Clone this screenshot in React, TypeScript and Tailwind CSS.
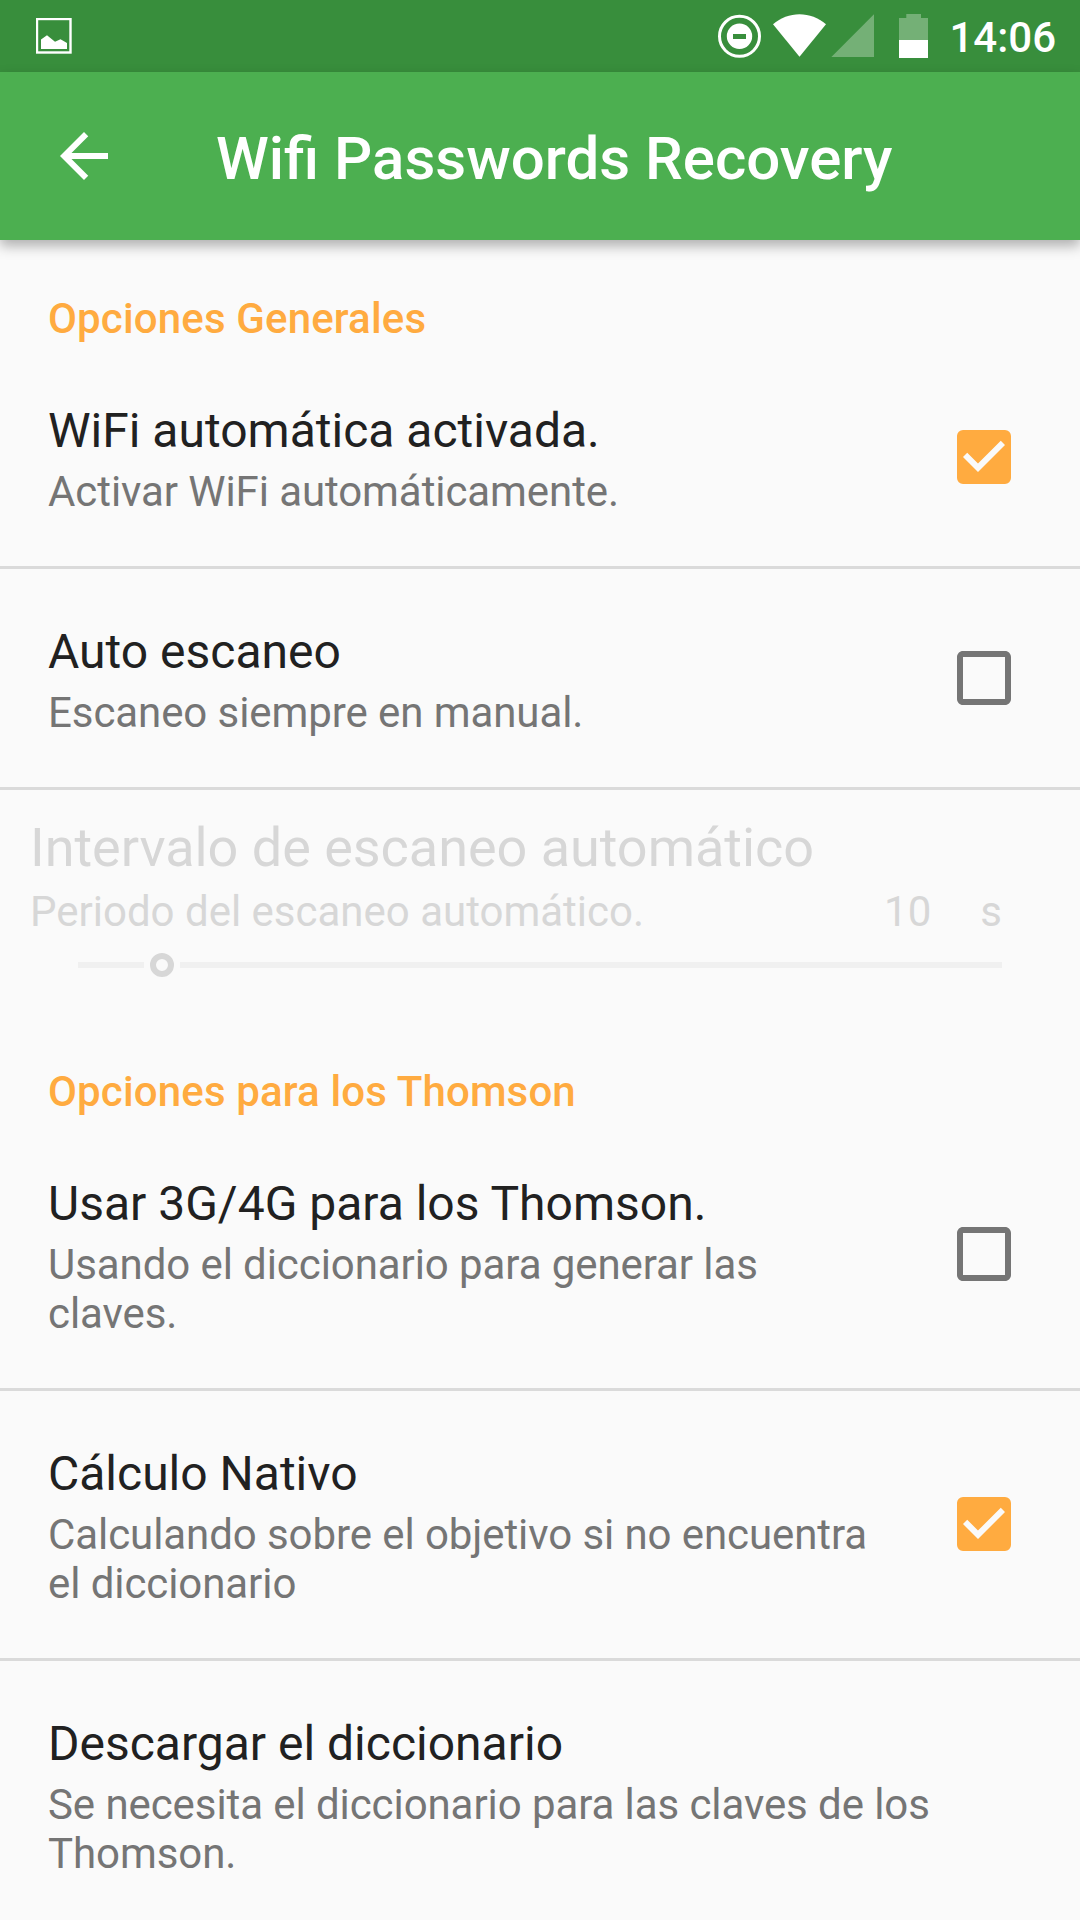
import {MdArrowBack, MdCheckBox, MdCheckBoxOutlineBlank} from 'react-icons/md';

type RowProps = {
  title: string;
  summary: string;
};

type CheckRowProps = RowProps & {
  checked?: boolean;
};

function StatusBar() {
  return (
    <div className="flex h-[72px] items-center justify-between bg-[#388e3c] text-white">
      <svg className="ml-9" width="36" height="36" viewBox="0 0 36 36">
        <rect x="1" y="1" width="33.5" height="33.5" fill="none" stroke="currentColor" strokeWidth="2.4" />
        <path d="M5 31V21.5L11 17.3L19 23.7L24.5 21.3L31 25V31Z" fill="currentColor" />
      </svg>
      <div className="flex items-center pr-6">
        <svg width="220" height="72" viewBox="712 0 220 72" fill="currentColor">
          <circle cx="739.5" cy="36.3" r="20" fill="none" stroke="currentColor" strokeWidth="3" />
          <path
            fillRule="evenodd"
            d="M739.5 23.6a12.7 12.7 0 1 0 0 25.4a12.7 12.7 0 1 0 0-25.4ZM733 34H746V39H733Z"
          />
          <path d="M773 24.2C788 10.8 811 10.8 826 24.2L799.5 56.7Z" />
          <path d="M874 14.3V57H831.4Z" fillOpacity="0.3" />
          <path d="M906.3 14H921V18H928V40H899V18H906.3Z" fillOpacity="0.3" />
          <path d="M899 40H928V58H899Z" />
        </svg>
        <span className="mt-[3px] ml-[17px] text-[42px] leading-[49px] font-medium">14:06</span>
      </div>
    </div>
  );
}

function Toolbar() {
  return (
    <header className="flex h-[168px] items-center bg-[#4caf50] pl-12 text-white shadow-[0_6px_12px_rgba(0,0,0,0.3)]">
      <MdArrowBack size={72} />
      <h1 className="mt-[5px] ml-24 text-[60px] leading-[70px] font-medium">Wifi Passwords Recovery</h1>
    </header>
  );
}

function SectionTitle({children}: {children: string}) {
  return (
    <h2 className="pb-[5px] pl-12 text-[42px] leading-[49px] font-medium tracking-[0.15px] text-[#ffab40]">
      {children}
    </h2>
  );
}

function Row({title, summary}: RowProps) {
  return (
    <div className="min-w-0 flex-1 pt-[54px] pr-12 pb-[50px] pl-12">
      <p className="text-5xl leading-[57px] text-[#212121]">{title}</p>
      <p className="mt-2 text-[42px] leading-[49px] tracking-[-0.08px] text-[#757575]">{summary}</p>
    </div>
  );
}

function CheckRow({title, summary, checked}: CheckRowProps) {
  return (
    <div className="flex items-center gap-6 pr-[60px]">
      <Row title={title} summary={summary} />
      {checked ? (
        <MdCheckBox size={72} className="mb-px shrink-0 text-[#ffab40]" />
      ) : (
        <MdCheckBoxOutlineBlank size={72} className="mb-px shrink-0 text-[#757575]" />
      )}
    </div>
  );
}

function Divider() {
  return <div className="h-[3px] bg-[#dadada]" />;
}

function IntervalRow() {
  return (
    <div className="h-[272px] pt-[26px] pr-[78px] pl-[30px] text-[#d7d7d7]">
      <p className="text-[54px] leading-[63px] tracking-[-0.03px]">Intervalo de escaneo automático</p>
      <div className="mt-2 flex text-[42px] leading-[49px]">
        <span>Periodo del escaneo automático.</span>
        <span className="ml-auto">10</span>
        <span className="ml-[49px]">s</span>
      </div>
      <div className="mt-[17px] ml-12 flex h-6 items-center gap-1.5">
        <div className="h-1.5 w-[66px] bg-[#f0f0f0]" />
        <div className="size-6 rounded-full border-6 border-current" />
        <div className="h-1.5 flex-1 bg-[#f0f0f0]" />
      </div>
    </div>
  );
}

export default function App() {
  return (
    <div className="h-[1920px] w-[1080px] overflow-hidden bg-[#fafafa] font-['Roboto',sans-serif]">
      <StatusBar />
      <Toolbar />
      <main className="pt-[54px]">
        <SectionTitle>Opciones Generales</SectionTitle>
        <CheckRow title="WiFi automática activada." summary="Activar WiFi automáticamente." checked />
        <Divider />
        <CheckRow title="Auto escaneo" summary="Escaneo siempre en manual." />
        <Divider />
        <IntervalRow />
        <div className="pt-[5px]">
          <SectionTitle>Opciones para los Thomson</SectionTitle>
        </div>
        <CheckRow
          title="Usar 3G/4G para los Thomson."
          summary="Usando el diccionario para generar las claves."
        />
        <Divider />
        <CheckRow
          title="Cálculo Nativo"
          summary="Calculando sobre el objetivo si no encuentra el diccionario"
          checked
        />
        <Divider />
        <Row
          title="Descargar el diccionario"
          summary="Se necesita el diccionario para las claves de los Thomson."
        />
      </main>
    </div>
  );
}
